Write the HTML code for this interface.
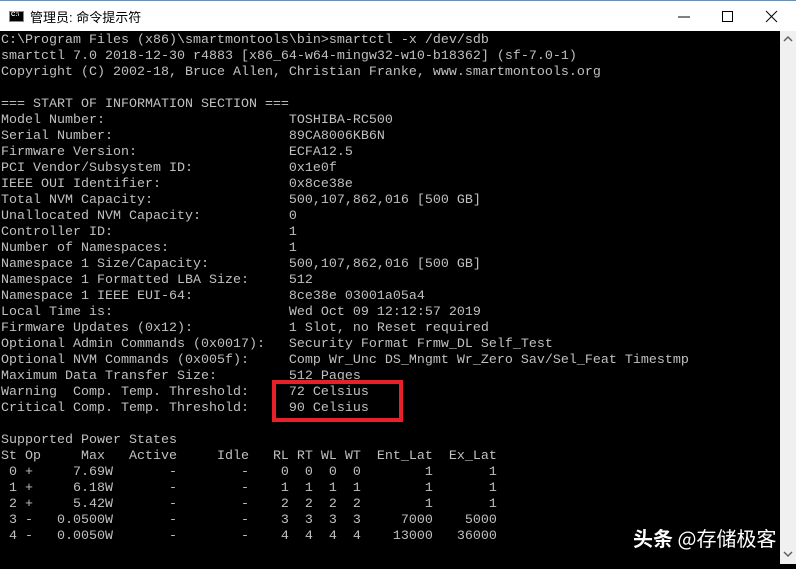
<!DOCTYPE html>
<html><head><meta charset="utf-8"><style>
html,body{margin:0;padding:0;width:796px;height:564px;overflow:hidden;background:#000}
#title{position:absolute;left:0;top:0;width:796px;height:31px;background:#fff;border-top:1px solid #6a8fb5;box-sizing:border-box}
#title .t{position:absolute;left:30px;top:6px;font:13px "Liberation Sans","Noto Sans CJK SC",sans-serif;color:#000}
#icon{position:absolute;left:9px;top:10px;width:15px;height:11px;background:#000;border:1px solid #888;box-sizing:border-box}
#icon span{position:absolute;left:1px;top:0px;font:bold 6px "Liberation Sans",sans-serif;color:#fff}
#con{position:absolute;left:0;top:31px;width:780px;height:533px;background:#000}
pre{margin:0;position:absolute;left:1px;top:33px;font:13.33px/16px "Liberation Mono",monospace;color:#c0c0c0}
#sb{position:absolute;left:780px;top:31px;width:16px;height:533px;background:#f0f0f0}
#box{position:absolute;left:272px;top:380px;width:131px;height:42px;border:4px solid #e8202a;box-sizing:border-box}
#wm{position:absolute;left:633px;top:523px;font:bold 20px "Noto Sans CJK SC",sans-serif;color:#fff;white-space:nowrap;text-shadow:0 0 2px #000}
#wm b{font-weight:normal}
</style></head><body>
<div id="title"><div id="icon"><span>C:\</span></div><div class="t">管理员: 命令提示符</div>
<svg style="position:absolute;left:670px;top:8px" width="120" height="16">
<line x1="8" y1="8" x2="20" y2="8" stroke="#000" stroke-width="1"/>
<rect x="52.5" y="2.5" width="10" height="10" fill="none" stroke="#000"/>
<line x1="96" y1="2" x2="107" y2="13" stroke="#000"/><line x1="107" y1="2" x2="96" y2="13" stroke="#000"/>
</svg></div>
<div id="con"></div>
<pre>C:\Program Files (x86)\smartmontools\bin>smartctl -x /dev/sdb
smartctl 7.0 2018-12-30 r4883 [x86_64-w64-mingw32-w10-b18362] (sf-7.0-1)
Copyright (C) 2002-18, Bruce Allen, Christian Franke, www.smartmontools.org

=== START OF INFORMATION SECTION ===
Model Number:                       TOSHIBA-RC500
Serial Number:                      89CA8006KB6N
Firmware Version:                   ECFA12.5
PCI Vendor/Subsystem ID:            0x1e0f
IEEE OUI Identifier:                0x8ce38e
Total NVM Capacity:                 500,107,862,016 [500 GB]
Unallocated NVM Capacity:           0
Controller ID:                      1
Number of Namespaces:               1
Namespace 1 Size/Capacity:          500,107,862,016 [500 GB]
Namespace 1 Formatted LBA Size:     512
Namespace 1 IEEE EUI-64:            8ce38e 03001a05a4
Local Time is:                      Wed Oct 09 12:12:57 2019
Firmware Updates (0x12):            1 Slot, no Reset required
Optional Admin Commands (0x0017):   Security Format Frmw_DL Self_Test
Optional NVM Commands (0x005f):     Comp Wr_Unc DS_Mngmt Wr_Zero Sav/Sel_Feat Timestmp
Maximum Data Transfer Size:         512 Pages
Warning  Comp. Temp. Threshold:     72 Celsius
Critical Comp. Temp. Threshold:     90 Celsius

Supported Power States
St Op     Max   Active     Idle   RL RT WL WT  Ent_Lat  Ex_Lat
 0 +     7.69W       -        -    0  0  0  0        1       1
 1 +     6.18W       -        -    1  1  1  1        1       1
 2 +     5.42W       -        -    2  2  2  2        1       1
 3 -   0.0500W       -        -    3  3  3  3     7000    5000
 4 -   0.0050W       -        -    4  4  4  4    13000   36000</pre>
<div id="box"></div>
<div id="sb"><svg width="16" height="533"><polyline points="4,10 8,6 12,10" fill="none" stroke="#606060" stroke-width="1.5"/><polyline points="4,521 8,525 12,521" fill="none" stroke="#606060" stroke-width="1.5"/></svg></div>
<div id="wm">头条 <b>@存储极客</b></div>
</body></html>
